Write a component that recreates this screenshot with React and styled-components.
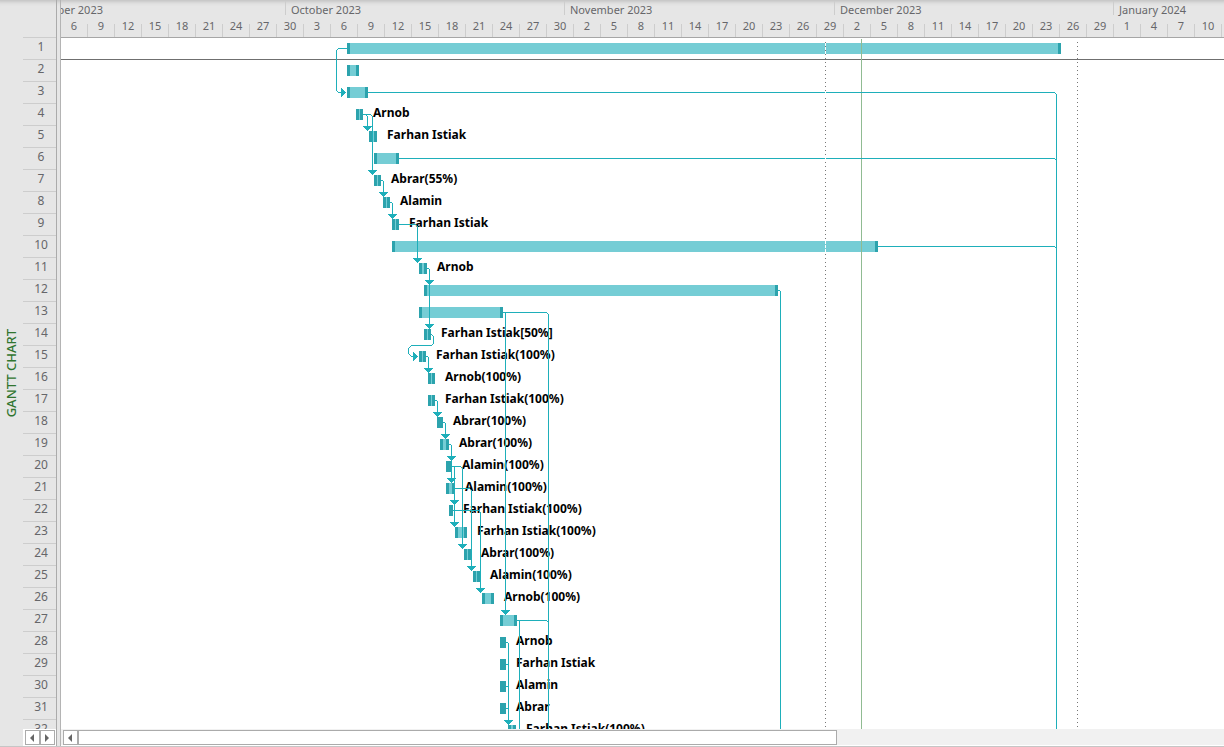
import React from "react";
import styled, { createGlobalStyle } from "styled-components";

const ORIGIN_X = 61;
const ORIGIN_Y = 38;
const ROW = 22;

const Global = createGlobalStyle`
  *, *::before, *::after { box-sizing: border-box; }
  html, body, #root { height: 100%; margin: 0; }
  body {
    background: #fff;
    font-family: "Noto Sans", "Open Sans", sans-serif;
    font-size: 11px;
    line-height: 14px;
    color: #66666a;
    overflow: hidden;
  }
`;

const Window = styled.div`
  display: flex;
  width: 100%;
  height: 100vh;
  background: #e6e6e6;
  border-bottom: 1px solid #c6c6c6;
  box-shadow: inset 0 6px 5px -5px #b4b4b4;
`;

const ViewTab = styled.div`
  flex: none;
  width: 23px;
  padding-right: 2px;
  display: flex;
  align-items: center;
  justify-content: center;
`;

const ViewName = styled.h1`
  margin: 0;
  writing-mode: vertical-rl;
  transform: rotate(180deg);
  font-size: 13px;
  line-height: 22px;
  font-weight: 500;
  color: #31752f;
  white-space: nowrap;
`;

const Gutter = styled.div`
  flex: none;
  width: 34px;
  display: flex;
  flex-direction: column;
  border-right: 1px solid #ababab;
`;

const GutterHead = styled.div`
  flex: none;
  height: 38px;
  border-bottom: 1px solid #cdcdcd;
`;

const GutterRows = styled.ol`
  flex: 1;
  min-height: 0;
  margin: 0;
  padding: 0;
  list-style: none;
  overflow: hidden;
`;

const GutterRow = styled.li`
  height: ${ROW}px;
  padding: 1px 0 0 3px;
  border-bottom: 1px solid #cdcdcd;
  text-align: center;
  font-size: 12px;
  line-height: 16px;
`;

const GutterFoot = styled.div`
  flex: none;
  display: flex;
  height: 17px;
  padding: 1px 2px;
  background: #fff;
`;

const ScrollButton = styled.button`
  flex: none;
  width: 15px;
  height: 15px;
  padding: 0;
  display: grid;
  place-items: center;
  background: #fff;
  border: 1px solid #ababab;
`;

const Splitter = styled.div`
  flex: none;
  width: 4px;
  border-right: 1px solid #b4b4b4;
`;

const Timeline = styled.main`
  flex: 1;
  min-width: 0;
  display: flex;
  flex-direction: column;
`;

const Scale = styled.header`
  flex: none;
  height: 38px;
  border-bottom: 1px solid #a6a6a6;
  overflow: hidden;
`;

const Months = styled.div`
  display: flex;
  height: 24px;
  padding-top: 1px;
`;

const Month = styled.div`
  flex: none;
  width: ${(p) => p.$width}px;
  height: 14px;
  padding-left: 5px;
  border-right: 1px solid #cdcdcd;
  line-height: 18px;
  white-space: nowrap;
`;

/* The first month is scrolled part of the way out of view. */
const CutMonth = styled(Month)`
  display: flex;
  justify-content: flex-end;
  padding: 0 182px 0 0;
  overflow-x: clip;
`;

const Days = styled.div`
  display: flex;
  height: 13px;
`;

const Day = styled.div`
  flex: none;
  width: 27px;
  border-right: 1px solid #cdcdcd;
  text-align: center;
  line-height: 4px;
`;

const Canvas = styled.section`
  position: relative;
  flex: 1;
  min-height: 0;
  overflow: hidden;
  background: #fff;
`;

const TaskRow = styled.div`
  display: flex;
  gap: 10px;
  height: ${ROW}px;
  padding-top: 5px;
  border-bottom: ${(p) => (p.$ruled ? "1px solid #6f6f6f" : "0")};
`;

const Bar = styled.div`
  flex: none;
  height: 11px;
  margin-left: ${(p) => p.$start - ORIGIN_X}px;
  width: ${(p) => p.$end - p.$start}px;
  background: #75cdd5;
  border: solid #2ca3ad;
  border-width: 0 ${(p) => Math.min(3, Math.floor((p.$end - p.$start) / 2))}px;
`;

const Resource = styled.span`
  height: 16px;
  margin-top: -5px;
  font-size: 12px;
  line-height: 18px;
  font-weight: 700;
  color: #000;
  white-space: nowrap;
`;

const Links = styled.svg`
  position: absolute;
  inset: 0;
  width: 100%;
  height: 100%;
  shape-rendering: crispEdges;
`;

const HScroll = styled.div`
  flex: none;
  display: flex;
  height: 17px;
  padding: 1px 0 1px 2px;
  background: #f1f1f1;
  border-bottom: 1px solid #fff;
`;

const Track = styled.div`
  flex: 1;
  display: flex;
`;

const Thumb = styled.div`
  flex: 758 1 0;
  height: 15px;
  border: 1px solid #ababab;
  background: #fff;
`;

const TrackRest = styled.div`
  flex: 388 1 0;
`;

const months = [
  { name: "October 2023", width: 279 },
  { name: "November 2023", width: 270 },
  { name: "December 2023", width: 279 },
  { name: "January 2024", width: 279 },
];

const days = [
  6, 9, 12, 15, 18, 21, 24, 27, 30, 3, 6, 9, 12, 15, 18, 21, 24, 27, 30, 2, 5,
  8, 11, 14, 17, 20, 23, 26, 29, 2, 5, 8, 11, 14, 17, 20, 23, 26, 29, 1, 4, 7, 10,
];

// [start, end, resource]
const tasks = [
  [347, 1061],
  [347, 359],
  [347, 368],
  [356, 363, "Arnob"],
  [369, 377, "Farhan Istiak"],
  [374, 399],
  [374, 381, "Abrar(55%)"],
  [383, 390, "Alamin"],
  [392, 399, "Farhan Istiak"],
  [392, 878],
  [419, 427, "Arnob"],
  [424, 778],
  [419, 503],
  [424, 431, "Farhan Istiak[50%]"],
  [419, 426, "Farhan Istiak(100%)"],
  [428, 435, "Arnob(100%)"],
  [428, 435, "Farhan Istiak(100%)"],
  [437, 443, "Abrar(100%)"],
  [440, 449, "Abrar(100%)"],
  [446, 452, "Alamin(100%)"],
  [446, 455, "Alamin(100%)"],
  [449, 453, "Farhan Istiak(100%)"],
  [455, 467, "Farhan Istiak(100%)"],
  [464, 471, "Abrar(100%)"],
  [473, 480, "Alamin(100%)"],
  [482, 494, "Arnob(100%)"],
  [500, 517],
  [500, 506, "Arnob"],
  [500, 506, "Farhan Istiak"],
  [500, 506, "Alamin"],
  [500, 506, "Abrar"],
  [508, 516, "Farhan Istiak(100%)"],
];

const rowMid = (row) => ORIGIN_Y + 10 + ROW * (row - 1);

// [from row, x of the vertical run, to row (null runs off the chart)]
const drops = [
  [3, 1056, null],
  [6, 1056, null],
  [10, 1056, null],
  [4, 367, 5],
  [4, 372, 7],
  [7, 383, 8],
  [8, 392, 9],
  [9, 417, 11],
  [11, 429, 12],
  [11, 429, 14],
  [12, 780, null],
  [13, 505, 27],
  [13, 548, null],
  [15, 428, 16],
  [17, 437, 18],
  [18, 445, 19],
  [19, 451, 20],
  [19, 451, 21],
  [20, 454, 22],
  [20, 462, 24],
  [20, 454, 23],
  [21, 471, 25],
  [22, 480, 26],
  [27, 519, null],
  [27, 548, null],
  [28, 508, 32],
  [29, 508, 32],
  [30, 508, 32],
  [31, 508, 32],
];

const DownArrow = ({ x, y }) => (
  <path
    d={`M${x - 4} ${y}h8M${x - 3} ${y + 1}h6M${x - 2} ${y + 2}h4M${x - 1} ${y + 3}h2M${x} ${y + 3}v1`}
    strokeLinecap="square"
  />
);

const RightArrow = ({ x, y }) => (
  <path
    d={`M${x} ${y - 4}v8M${x + 1} ${y - 3}v6M${x + 2} ${y - 2}v4M${x + 3} ${y - 1}v2M${x + 3} ${y}h1`}
    strokeLinecap="square"
  />
);

function Drop({ from, x, to }) {
  const y = rowMid(from);
  const end = tasks[from - 1][1];
  const k = x - end > 2 ? 2 : 1;
  const bottom = to ? rowMid(to) - 6 : 2000;
  return (
    <>
      <path d={`M${end - 1} ${y}H${x - k}L${x} ${y + k}V${bottom}`} />
      {to && <DownArrow x={x} y={rowMid(to) - 10} />}
    </>
  );
}

const Triangle = ({ right }) => (
  <svg width="5" height="8" viewBox="0 0 5 8" aria-hidden="true">
    <path d={right ? "M0 0L4 4L0 8Z" : "M4 0L0 4L4 8Z"} fill="#666" />
  </svg>
);

export default function App() {
  return (
    <>
      <Global />
      <Window>
        <ViewTab>
          <ViewName>GANTT CHART</ViewName>
        </ViewTab>
        <Gutter>
          <GutterHead />
          <GutterRows>
            {tasks.map((_, i) => (
              <GutterRow key={i}>{i + 1}</GutterRow>
            ))}
          </GutterRows>
          <GutterFoot>
            <ScrollButton aria-label="Scroll table left"><Triangle /></ScrollButton>
            <ScrollButton aria-label="Scroll table right"><Triangle right /></ScrollButton>
          </GutterFoot>
        </Gutter>
        <Splitter />
        <Timeline>
          <Scale>
            <Months>
              <CutMonth $width={225}>September 2023</CutMonth>
              {months.map((m) => (
                <Month key={m.name} $width={m.width}>{m.name}</Month>
              ))}
            </Months>
            <Days>
              {days.map((d, i) => (
                <Day key={i}>{d}</Day>
              ))}
            </Days>
          </Scale>
          <Canvas>
            {tasks.map(([start, end, who], i) => (
              <TaskRow key={i} $ruled={i === 0}>
                <Bar $start={start} $end={end} />
                {who && <Resource>{who}</Resource>}
              </TaskRow>
            ))}
            <Links aria-hidden="true">
              <g transform="translate(-60.5 -37.5)" fill="none" stroke="#1eafba">
                <path d="M861 38V2000" stroke="#90bb92" />
                <path d="M346 48H338L336 50V90L338 92H341" />
                <RightArrow x={341} y={92} />
                <path d="M431 334L433 336V343L431 345H411L408 348V353L411 356H413" />
                <RightArrow x={413} y={356} />
                {drops.map(([from, x, to], i) => (
                  <Drop key={i} from={from} x={x} to={to} />
                ))}
                <path d="M825 41V2000M1077 41V2000" stroke="#777" strokeDasharray="1 3" />
                <path d="M825 42V54M825 91V94M825 157V160M825 240V252" stroke="#fff" strokeDasharray="3 1" />
              </g>
            </Links>
          </Canvas>
          <HScroll>
            <ScrollButton aria-label="Scroll timeline left"><Triangle /></ScrollButton>
            <Track>
              <Thumb />
              <TrackRest />
            </Track>
          </HScroll>
        </Timeline>
      </Window>
    </>
  );
}
